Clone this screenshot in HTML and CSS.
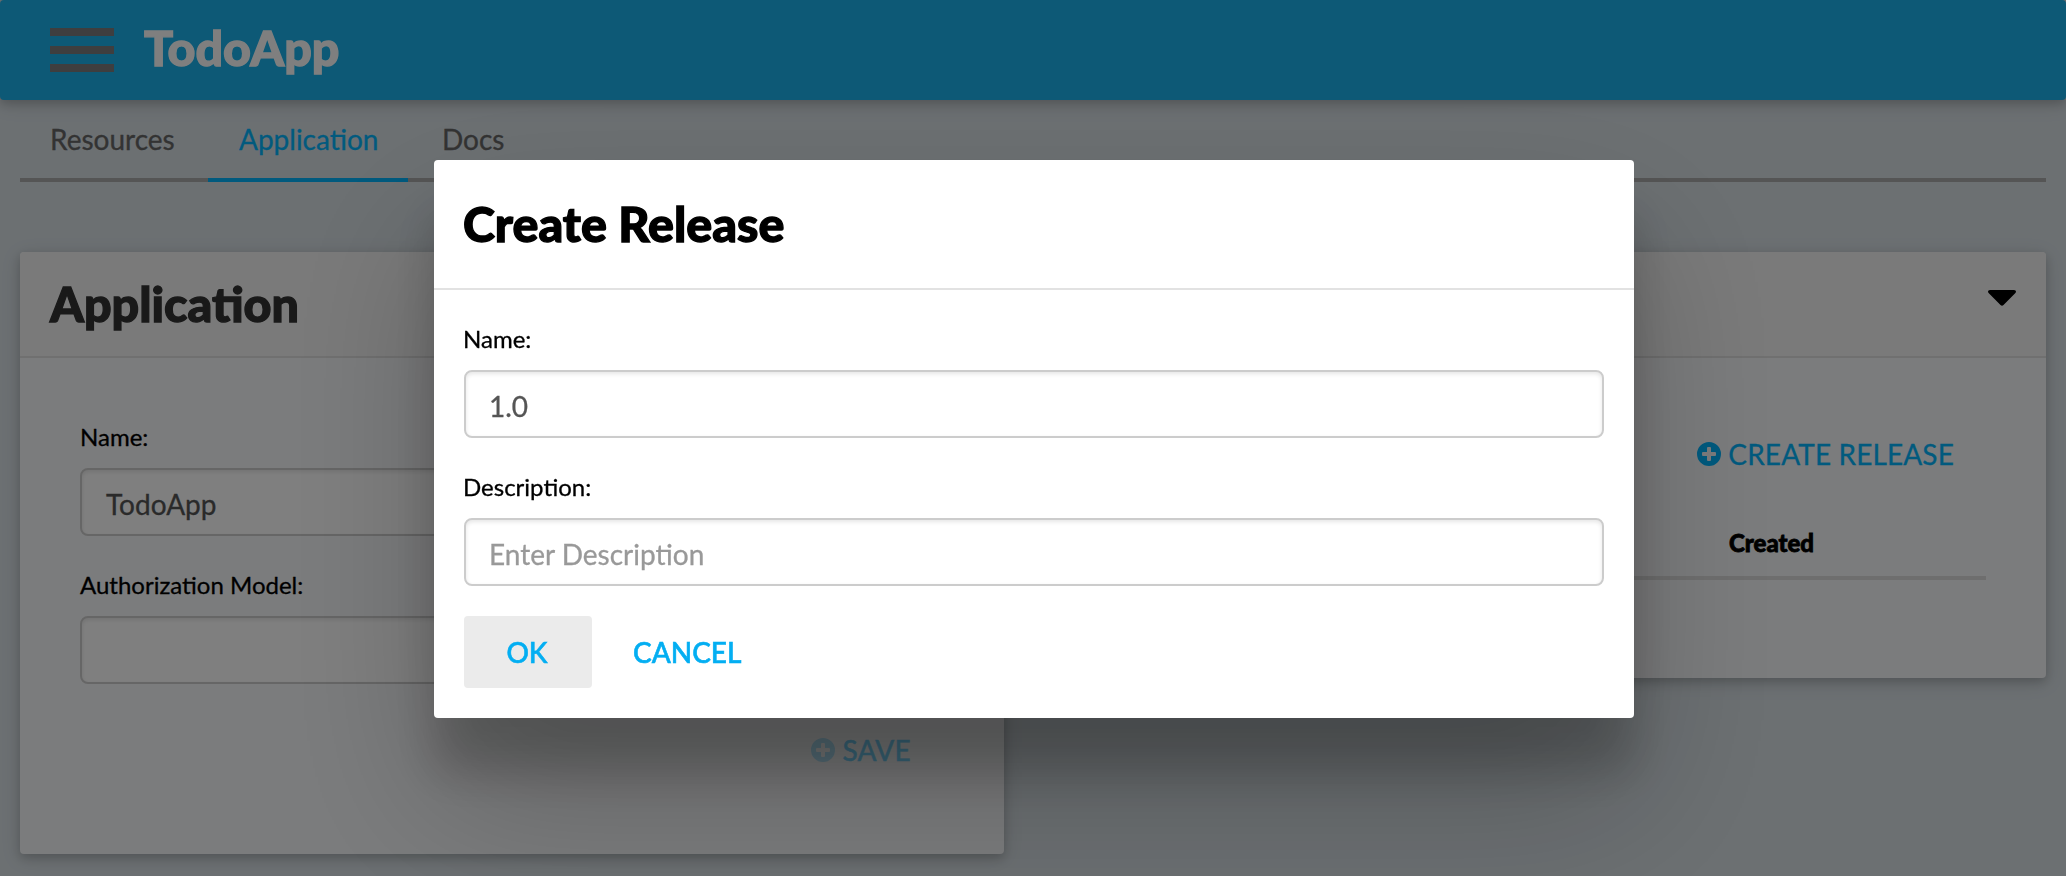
FILE: index.html
```html
<!DOCTYPE html>
<html lang="en">
<head>
<meta charset="utf-8">
<title>TodoApp</title>
<link rel="stylesheet" href="styles.css">
</head>
<body>
<header class="topbar">
  <div class="menu"><span></span><span></span><span></span></div>
  <h1 class="brand">TodoApp</h1>
</header>
<nav class="tabs">
  <a class="tab tab-resources">Resources</a>
  <a class="tab tab-application active">Application</a>
  <a class="tab">Docs</a>
</nav>
<main class="columns">
  <section class="card card-app">
    <div class="card-head"><h2 class="card-title">Application</h2></div>
    <div class="card-body">
      <label class="label">Name:</label>
      <div class="input">TodoApp</div>
      <label class="label">Authorization Model:</label>
      <div class="input"></div>
      <div class="action save">
        <svg class="plus" viewBox="0 0 24 24"><path fill="currentColor" fill-rule="evenodd" d="M12 0a12 12 0 1 0 0 24a12 12 0 0 0 0-24zM11 5h2q1 0 1 1v4h4q1 0 1 1v2q0 1-1 1h-4v4q0 1-1 1h-2q-1 0-1-1v-4H6q-1 0-1-1v-2q0-1 1-1h4V6q0-1 1-1z"/></svg>
        <span>SAVE</span>
      </div>
    </div>
  </section>
  <section class="card card-releases">
    <div class="card-head head-right">
      <svg class="caret" viewBox="0 0 28 16"><path d="M2 0h24q2 0 2 1.600q0 .7-.6 1.300L15.500 15q-1.500 1.300-3 0L.6 2.900Q0 2.300 0 1.600Q0 0 2 0z"/></svg>
    </div>
    <div class="card-body">
      <div class="action create">
        <svg class="plus" viewBox="0 0 24 24"><path fill="currentColor" fill-rule="evenodd" d="M12 0a12 12 0 1 0 0 24a12 12 0 0 0 0-24zM11 5h2q1 0 1 1v4h4q1 0 1 1v2q0 1-1 1h-4v4q0 1-1 1h-2q-1 0-1-1v-4H6q-1 0-1-1v-2q0-1 1-1h4V6q0-1 1-1z"/></svg>
        <span>CREATE RELEASE</span>
      </div>
      <div class="table-head"><span class="th">Created</span></div>
    </div>
  </section>
</main>
<div class="overlay">
  <div class="modal">
    <div class="modal-head"><h2 class="modal-title">Create Release</h2></div>
    <div class="modal-body">
      <label class="label">Name:</label>
      <div class="input">1.0</div>
      <label class="label">Description:</label>
      <div class="input placeholder">Enter Description</div>
      <div class="buttons">
        <button class="btn btn-ok">OK</button>
        <button class="btn btn-cancel">CANCEL</button>
      </div>
    </div>
  </div>
</div>
</body>
</html>
```
FILE: styles.css
```css
* { box-sizing: border-box; }
body {
  margin: 0;
  height: 876px;
  overflow: hidden;
  background: #d8e0e5;
  font-family: Lato, "Noto Sans", sans-serif;
  font-size: 28px;
  color: #000;
  -webkit-text-stroke: .3px;
}
h1, h2 {
  margin: 0;
  font-size: 48.4px;
  line-height: 58px;
  font-weight: 900;
  white-space: nowrap;
  -webkit-text-stroke: 1.3px;
}
.topbar {
  display: flex;
  align-items: flex-start;
  height: 100px;
  padding: 0 50px;
  border-radius: 4px;
  background: #1ab2ec;
  box-shadow: 0 4px 10px rgba(0,0,0,.16), 0 4px 20px rgba(0,0,0,.12);
}
.menu { display: flex; flex-direction: column; gap: 10px; width: 64px; margin: 28px 30px 0 0; }
.menu span { height: 8px; background: #7c7c7e; }
.brand { padding-top: 18px; color: #fff; }
.tabs {
  display: flex;
  height: 82px;
  margin: 0 20px;
  border-bottom: 4px solid #aaa;
}
.tab {
  height: 82px;
  padding: 22px 31px 0;
  line-height: 34px;
  color: #666;
  white-space: nowrap;
}
.tab-resources { width: 188px; padding-left: 30px; }
.tab-application { width: 200px; }
.tab:last-child { padding-left: 34px; }
.tab.active { color: #02b4fc; border-bottom: 4px solid #02b4fc; }
.columns { display: flex; align-items: flex-start; justify-content: space-between; padding: 70px 20px 0; }
.card {
  width: 984px;
  border-radius: 4px;
  background: #f7f8fa;
  box-shadow: 0 4px 10px rgba(0,0,0,.16), 0 4px 20px rgba(0,0,0,.12);
}
.card-app { height: 602px; }
.card-releases { height: 426px; }
.card-head {
  height: 106px;
  padding: 22px 30px 0;
  border-bottom: 2px solid #e0e0e0;
  border-radius: 4px 4px 0 0;
  background: #f5f5f5;
}
.head-right { display: flex; justify-content: flex-end; padding-top: 38px; }
.caret { width: 28px; height: 16px; }
.card-title { color: #333; }
.card-body { padding: 65px 60px 0; }
.label { display: block; height: 45px; font-size: 24px; line-height: 28px; white-space: nowrap; }
.input {
  height: 68px;
  padding: 0 24px;
  border: 2px solid #ccc;
  border-radius: 8px;
  background: #fff;
  box-shadow: inset 0 2px 4px rgba(0,0,0,.1);
  line-height: 68px;
  color: #555;
  white-space: nowrap;
}
.input + .label { margin-top: 35px; }
.placeholder { color: #999; }
.action { display: flex; align-items: center; gap: 7px; line-height: 34px; color: #02b4fc; white-space: nowrap; }
.plus { width: 24px; height: 24px; flex: none; }
.save { justify-content: flex-end; padding: 49px 33px 0 0; letter-spacing: .3px; }
.save .plus { opacity: .28; }
.save span { opacity: .52; -webkit-text-stroke: .6px; }
.create { margin: 14px 32px 0 0; justify-content: flex-end; letter-spacing: .13px; }
.table-head { display: flex; height: 109px; padding: 58px 0 0 607px; border-bottom: 4px solid #ddd; }
.th { font-size: 24px; line-height: 28px; font-weight: 900; -webkit-text-stroke: .8px; }
.overlay {
  position: fixed;
  inset: 0;
  display: flex;
  align-items: flex-start;
  padding: 160px 0 0 434px;
  background: rgba(0,0,0,.5);
}
.modal {
  width: 1200px;
  height: 558px;
  border-radius: 4px;
  background: #fff;
  box-shadow: 0 54px 48px rgba(0,0,0,.2), 0 80px 154px rgba(0,0,0,.22);
}
.modal-head { height: 130px; padding: 34px 29px 0; border-bottom: 2px solid #e2e2e2; }
.modal-body { padding: 35px 30px 0; }
.modal .label { text-indent: -1px; }
.modal .input { padding-left: 23px; }
.buttons { display: flex; margin-top: 30px; }
.btn {
  height: 72px;
  padding: 0;
  border: 0;
  border-radius: 4px;
  background: transparent;
  font: 500 28px Lato, "Noto Sans", sans-serif;
  color: #03aef2;
  -webkit-text-stroke: .6px;
}
.btn-ok { width: 128px; padding-right: 2px; background: #ebebeb; }
.btn-cancel { margin-left: 41px; }
```
